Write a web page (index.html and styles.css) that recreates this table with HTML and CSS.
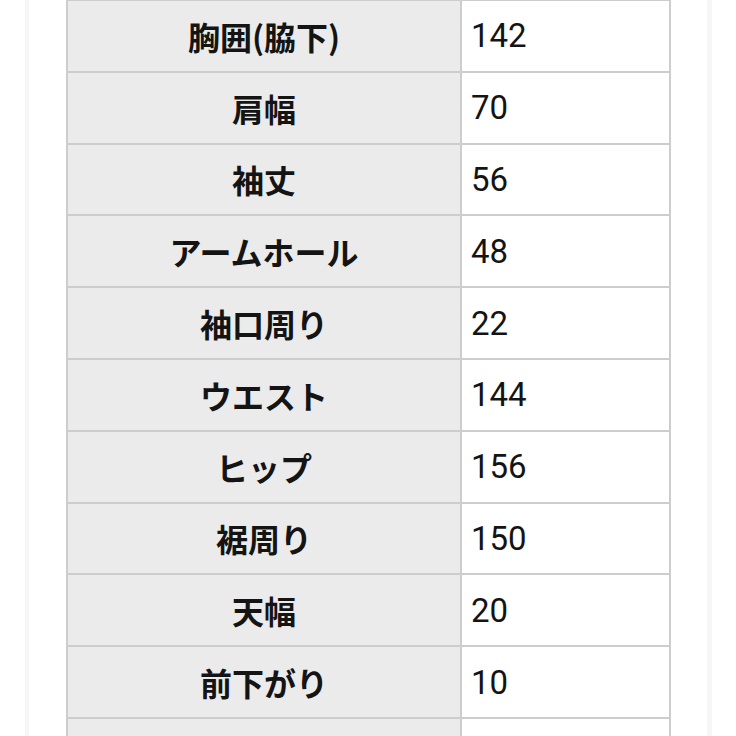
FILE: index.html
```html
<!DOCTYPE html>
<html lang="ja">
<head>
<meta charset="utf-8">
<title>サイズ表</title>
<link rel="stylesheet" href="styles.css">
</head>
<body>
<div class="frame">
  <div class="size-table">
    <div class="cell label">胸囲(脇下)</div><div class="cell value">142</div>
    <div class="cell label">肩幅</div><div class="cell value">70</div>
    <div class="cell label">袖丈</div><div class="cell value">56</div>
    <div class="cell label">アームホール</div><div class="cell value">48</div>
    <div class="cell label">袖口周り</div><div class="cell value">22</div>
    <div class="cell label">ウエスト</div><div class="cell value">144</div>
    <div class="cell label">ヒップ</div><div class="cell value">156</div>
    <div class="cell label">裾周り</div><div class="cell value">150</div>
    <div class="cell label">天幅</div><div class="cell value">20</div>
    <div class="cell label">前下がり</div><div class="cell value">10</div>
    <div class="cell label last"></div><div class="cell value last"></div>
  </div>
</div>
</body>
</html>
```

FILE: styles.css
```css
html, body {
  margin: 0;
  padding: 0;
  background: #ffffff;
  height: 736px;
  overflow: hidden;
}

.frame {
  margin-left: 25px;
  width: 687px;
  height: 736px;
  box-sizing: border-box;
  border-left: 4px solid #f6f6f6;
  border-right: 5px solid #f6f6f6;
  padding-left: 37px;
  overflow: hidden;
}

.size-table {
  display: grid;
  grid-template-columns: 394px 209px;
  grid-template-rows: repeat(10, 71.8px) 1fr;
  width: max-content;
  height: 737px;
  box-sizing: border-box;
  margin-top: -1px;
  border-left: 2px solid #cdcdcd;
  border-top: 2px solid #cdcdcd;
}

.cell {
  border-right: 2px solid #cdcdcd;
  border-bottom: 2px solid #cdcdcd;
  display: flex;
  align-items: center;
  color: #141414;
}

.cell.last {
  border-bottom: none;
}

.label {
  background: #ebebeb;
  justify-content: center;
  font-family: "Noto Sans CJK JP", "Noto Sans", sans-serif;
  font-weight: 700;
  font-size: 32px;
}

.value {
  background: #ffffff;
  padding-left: 9px;
  font-family: Roboto, "Noto Sans", sans-serif;
  font-weight: 400;
  font-size: 33px;
}
```
